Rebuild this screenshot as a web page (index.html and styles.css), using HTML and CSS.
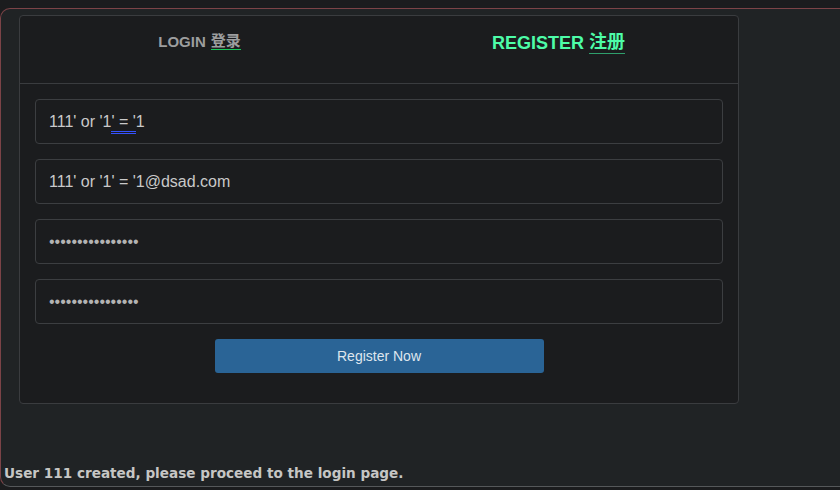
FILE: index.html
```html
<!DOCTYPE html>
<html>
<head>
<meta charset="utf-8">
<link rel="stylesheet" href="styles.css">
</head>
<body>
<div class="wrap">
  <div class="card">
    <div class="tabs">
      <div class="tab tab-login">LOGIN <span class="cn">登录</span></div>
      <div class="tab tab-reg">REGISTER <span class="cn">注册</span></div>
    </div>
    <div class="form">
      <div class="field">111' or '1<span class="ime">' = '</span>1</div>
      <div class="field">111' or '1' = '1@dsad.com</div>
      <div class="field pw">••••••••••••••••</div>
      <div class="field pw">••••••••••••••••</div>
      <div class="actions"><button class="btn">Register Now</button></div>
    </div>
  </div>
  <div class="msg">User 111 created, please proceed to the login page.</div>
</div>
</body>
</html>
```
FILE: styles.css
```css
html, body {
  margin: 0;
  padding: 0;
  background: #1b1c1e;
  overflow: hidden;
  height: 490px;
}
.wrap {
  margin-top: 8px;
  width: 880px;
  height: 479px;
  box-sizing: border-box;
  background: #202325;
  border: 1px solid #7b4347;
  border-bottom-color: #55585a;
  border-radius: 10px;
  padding: 6px 0 0 18px;
  position: relative;
}
.card {
  width: 720px;
  box-sizing: border-box;
  background: #1b1c1e;
  border: 1px solid #3a3c3f;
  border-radius: 4px;
}
.tabs {
  display: flex;
  height: 67px;
  border-bottom: 1px solid #3a3c3f;
}
.tab {
  flex: 1;
  display: flex;
  justify-content: center;
  align-items: center;
  font-family: "Liberation Sans", Arial, "Noto Sans CJK SC", sans-serif;
  font-weight: bold;
  padding-bottom: 16px;
}
.tab-login {
  color: #9d9e9f;
  font-size: 15px;
}
.tab-reg {
  color: #4dfca8;
  font-size: 18px;
  padding-bottom: 12px;
}
.cn {
  margin-left: 5px;
  line-height: 1.1;
  border-bottom: 1px solid #19c85a;
}
.tab-reg .cn {
  border-bottom-color: #2f9f6c;
}
.form {
  padding: 15px 15px 30px 15px;
  display: flex;
  flex-direction: column;
  gap: 15px;
}
.field {
  height: 45px;
  box-sizing: border-box;
  border: 1px solid #3c3e41;
  border-radius: 4px;
  background: #1b1c1e;
  padding: 0 13px;
  display: flex;
  align-items: center;
  font-family: "Liberation Sans", Arial, sans-serif;
  font-size: 16px;
  color: #c9c9c9;
  white-space: pre;
}
.pw {
  color: #b3b3b3;
}
.ime {
  line-height: 1.1;
  border-bottom: 3px double #3552ff;
  margin-top: 4px;
  padding-bottom: 0;
}
.actions {
  display: flex;
  justify-content: center;
}
.btn {
  width: 329px;
  height: 34px;
  border: none;
  border-radius: 3px;
  background: #2a6496;
  color: #dfe6ee;
  font-family: "Liberation Sans", Arial, sans-serif;
  font-size: 14px;
  padding: 0;
}
.msg {
  margin: 61px 0 0 -15px;
  font-family: "DejaVu Sans", Verdana, sans-serif;
  font-weight: bold;
  font-size: 13.6px;
  color: #c6c6c4;
}
```
